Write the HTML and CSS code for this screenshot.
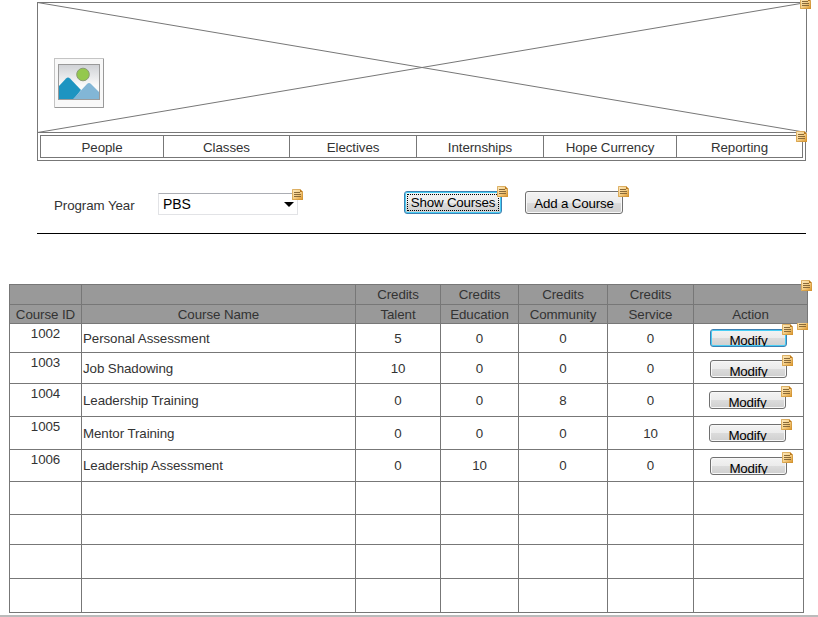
FILE: index.html
```html
<!DOCTYPE html>
<html lang="en">
<head>
<meta charset="utf-8">
<title>Courses</title>
<link rel="stylesheet" href="styles.css">
</head>
<body>
<svg class="defs" width="0" height="0" aria-hidden="true">
  <defs>
    <linearGradient id="paper" x1="0" y1="0" x2="1" y2="1">
      <stop offset="0" stop-color="#fdecc4"/><stop offset=".5" stop-color="#f5d08a"/><stop offset="1" stop-color="#dc9426"/>
    </linearGradient>
    <linearGradient id="sky" x1="0" y1="0" x2="0" y2="1">
      <stop offset="0" stop-color="#cfd1d5"/><stop offset=".6" stop-color="#fafafa"/>
    </linearGradient>
    <symbol id="note" viewBox="0 0 11 11">
      <path d="M0 0H8L11 3V11H0Z" fill="url(#paper)"/>
      <path d="M.5 10.5V.5H8M.5 10.5H10.5V3" fill="none" stroke="#c98f34" stroke-opacity=".6"/>
      <path d="M8 0V3H11Z" fill="#b9781c"/>
      <path d="M2 3.5H8M2 5.5H9M2 7.5H9" stroke="#8a6a38" fill="none"/>
    </symbol>
  </defs>
</svg>
<main class="page">
  <header class="banner">
    <svg class="cross" viewBox="0 0 770 131"><path d="M.5 .5L769.5 130.5M.5 130.5L769.5 .5" stroke="#777" fill="none"/></svg>
    <svg class="picture" viewBox="0 0 50 50">
      <rect x=".5" y=".5" width="49" height="49" fill="#f8f8f8" stroke="#c4c4c4"/>
      <path d="M49.5 1V49.5H1" fill="none" stroke="#999"/>
      <rect x="4.5" y="6.5" width="41" height="35" fill="url(#sky)" stroke="#999"/>
      <circle cx="29" cy="16.5" r="6.3" fill="#94c84d" stroke="#8a9b74"/>
      <path d="M5 28L12 20.5Q14 18.5 16 20.5L27 32L20 41H5Z" fill="#1d94c1"/>
      <path d="M19 41L33 26Q35 24 37 26L45 34V41Z" fill="#82b6d6"/>
      <path d="M4.5 41.5H45.5" stroke="#9b9b9b"/>
    </svg>
    <svg class="note note-banner"><use href="#note"/></svg>
  </header>
  <nav class="menu">
    <div class="tabs">
      <a>People</a><a>Classes</a><a>Electives</a><a>Internships</a><a>Hope Currency</a><a>Reporting</a>
    </div>
    <svg class="note note-menu"><use href="#note"/></svg>
  </nav>
  <section class="filters">
    <span class="label">Program Year</span>
    <div class="select">PBS<i class="arrow"></i><svg class="note note-select"><use href="#note"/></svg></div>
    <div class="button show focused"><span class="dotted">Show Courses</span><svg class="note"><use href="#note"/></svg></div>
    <div class="button add"><span>Add a Course</span><svg class="note"><use href="#note"/></svg></div>
  </section>
  <section class="courses">
    <div class="head">
      <div class="row top"><b></b><b></b><b>Credits</b><b>Credits</b><b>Credits</b><b>Credits</b><b></b></div>
      <div class="row sub"><b>Course ID</b><b>Course Name</b><b>Talent</b><b>Education</b><b>Community</b><b>Service</b><b>Action</b></div>
      <svg class="note note-head"><use href="#note"/></svg>
    </div>
    <div class="body">
      <div class="row h29"><b class="id">1002</b><b class="name">Personal Assessment</b><b>5</b><b>0</b><b>0</b><b>0</b><b class="action"><span class="button small focused"><span class="clip">Modify</span><svg class="note"><use href="#note"/></svg></span></b></div>
      <div class="row h31"><b class="id">1003</b><b class="name">Job Shadowing</b><b>10</b><b>0</b><b>0</b><b>0</b><b class="action low"><span class="button small"><span class="clip">Modify</span><svg class="note"><use href="#note"/></svg></span></b></div>
      <div class="row h33"><b class="id">1004</b><b class="name">Leadership Training</b><b>0</b><b>0</b><b>8</b><b>0</b><b class="action low left"><span class="button small"><span class="clip">Modify</span><svg class="note"><use href="#note"/></svg></span></b></div>
      <div class="row h33"><b class="id">1005</b><b class="name">Mentor Training</b><b>0</b><b>0</b><b>0</b><b>10</b><b class="action low left"><span class="button small"><span class="clip">Modify</span><svg class="note"><use href="#note"/></svg></span></b></div>
      <div class="row h32"><b class="id">1006</b><b class="name">Leadership Assessment</b><b>0</b><b>10</b><b>0</b><b>0</b><b class="action low"><span class="button small"><span class="clip">Modify</span><svg class="note"><use href="#note"/></svg></span></b></div>
      <div class="row h33"><b></b><b></b><b></b><b></b><b></b><b></b><b></b></div>
      <div class="row h30"><b></b><b></b><b></b><b></b><b></b><b></b><b></b></div>
      <div class="row h34"><b></b><b></b><b></b><b></b><b></b><b></b><b></b></div>
      <div class="row h34"><b></b><b></b><b></b><b></b><b></b><b></b><b></b></div>
      <div class="note-body"><svg class="note"><use href="#note"/></svg></div>
    </div>
  </section>
  <div class="edge"></div>
</main>
</body>
</html>
```

FILE: styles.css
```css
* { box-sizing: border-box; }
body {
  margin: 0;
  background: #fff;
  color: #333;
  font: 13.33px/16px "Liberation Sans", Arial, sans-serif;
  letter-spacing: -0.08px;
  overflow: hidden;
}
svg { display: block; }
.defs { position: absolute; }
.page { width: 818px; height: 617px; padding-top: 2px; overflow: hidden; }
.note { position: absolute; width: 11px; height: 11px; }

.banner {
  position: relative;
  width: 770px;
  height: 130px;
  margin-left: 37px;
  padding: 55px 0 0 16px;
  border: 1px solid #777;
  border-bottom: 0;
}
.cross { position: absolute; left: -1px; top: -1px; width: 770px; height: 131px; }
.picture { position: relative; width: 50px; height: 50px; }
.note-banner { left: 762px; top: -5px; }

.menu {
  position: relative;
  width: 769px;
  height: 29px;
  margin-left: 37px;
  padding: 2px;
  border: 1px solid #777;
}
.tabs {
  display: grid;
  grid-template-columns: 123px 126px 127px 127px 133px 125px;
  width: 763px;
  height: 23px;
  border: 1px solid #777;
}
.tabs a { height: 21px; padding-top: 2px; border-right: 1px solid #777; text-align: center; line-height: 19px; }
.tabs a:last-child { border-right: 0; }
.note-menu { left: 758px; top: -2px; }

.filters {
  display: flex;
  width: 769px;
  height: 73px;
  margin-left: 37px;
  padding: 30px 0 0 17px;
  border-bottom: 1px solid #000;
}
.label { width: 104px; padding-top: 7px; }
.select {
  position: relative;
  width: 140px;
  height: 22px;
  margin-top: 2px;
  padding-left: 4px;
  border: 1px solid #e2e3e6;
  border-top-color: #abadb3;
  color: #000;
  font-size: 14px;
  line-height: 21px;
}
.arrow {
  position: absolute;
  right: 3px;
  top: 8px;
  border: 5px solid transparent;
  border-top-color: #000;
  border-bottom: 0;
}
.note-select { left: 133px; top: -5px; }
.button {
  position: relative;
  display: block;
  width: 98px;
  height: 23px;
  border: 1px solid #707070;
  border-radius: 3px;
  background: linear-gradient(#f3f3f3, #ebebeb 50%, #dcdcdc 50%, #cfcfcf);
  box-shadow: inset 0 0 0 1px #f8f8f8;
  color: #000;
  letter-spacing: -0.18px;
  line-height: 23px;
  text-align: center;
}
.button .note { right: -7px; top: -6px; }
.focused { border-color: #3c7fb1; box-shadow: inset 0 0 0 1px #48cdf4; }
.show { margin-left: 106px; }
.add { margin-left: 23px; }
.dotted { display: block; margin: 2px; height: 17px; border: 1px dotted #000; line-height: 15px; white-space: nowrap; }

.courses { width: 799px; margin: 50px 0 0 9px; border-top: 1px solid #777; }
.head { position: relative; background: #999; }
.row { display: grid; grid-template-columns: 73px 274px 85px 78px 89px 86px 110px; width: 795px; }
.head .row { grid-template-columns: 73px 274px 85px 78px 89px 86px 114px; width: 799px; }
.row b {
  display: flex;
  align-items: center;
  justify-content: center;
  border: solid #777;
  border-width: 0 1px 1px 0;
  font-weight: 400;
}
.row b:first-child { border-left-width: 1px; }
.top { height: 20px; }
.sub { height: 19px; }
.sub b { padding-top: 2px; }
.note-head { left: 792px; top: -5px; }
.body { position: relative; }
.body .row b { padding-top: 1px; }
.body .row .id { align-items: flex-start; padding-top: 2px; }
.body .name { justify-content: flex-start; padding-left: 1px; }
.body .row .action { align-items: flex-start; justify-content: flex-start; padding: 5px 0 0 16px; }
.body .row .low { padding-top: 7px; }
.body .row .left { padding-left: 15px; }
.small { width: 77px; height: 18px; }
.clip { display: block; height: 16px; overflow: hidden; line-height: 21px; }
.h29 { height: 29px; }
.h30 { height: 30px; }
.h31 { height: 31px; }
.h32 { height: 32px; }
.h33 { height: 33px; }
.h34 { height: 34px; }
.note-body { position: absolute; left: 788px; top: -1px; width: 11px; height: 7px; overflow: hidden; }
.note-body .note { left: 0; bottom: 0; }
.edge { height: 2px; margin-top: 2px; background: #bbb; }
```
